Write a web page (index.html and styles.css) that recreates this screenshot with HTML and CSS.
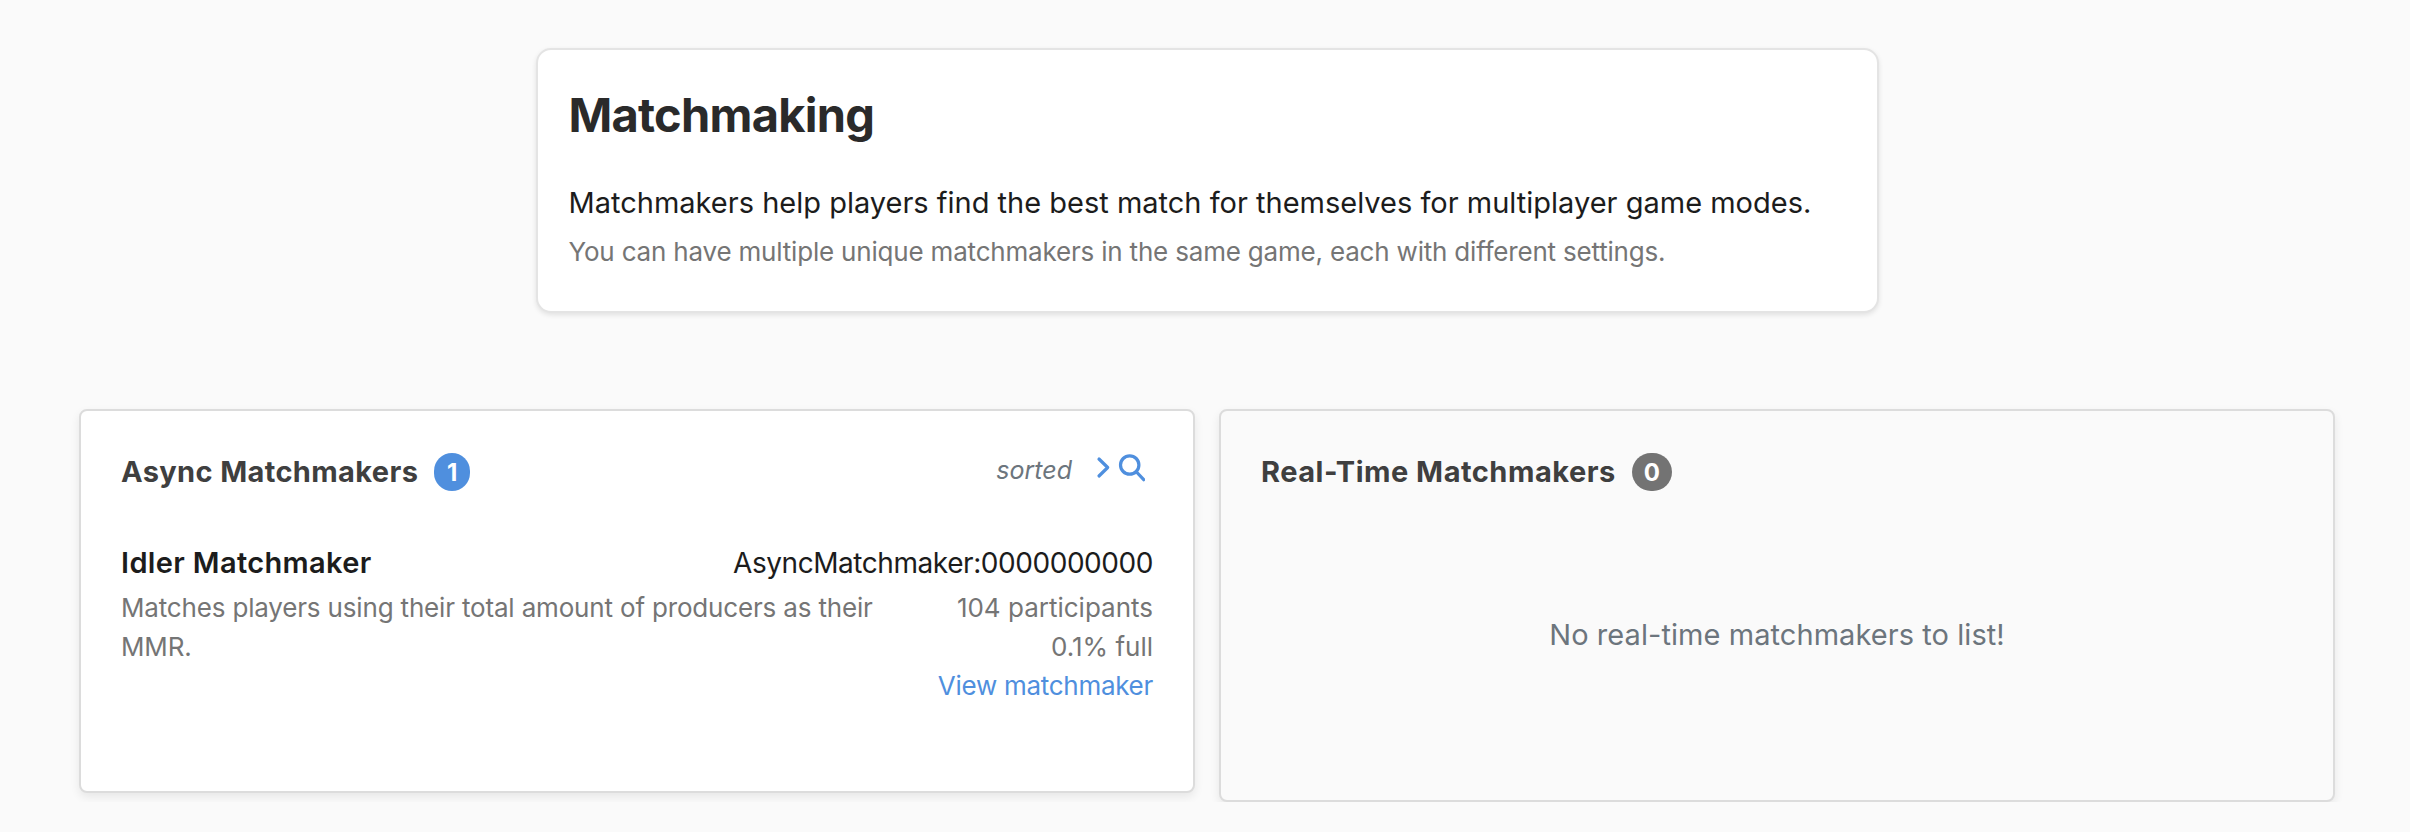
FILE: index.html
```html
<!DOCTYPE html>
<html lang="en">
<head>
<meta charset="utf-8">
<title>Matchmaking</title>
<link rel="stylesheet" href="styles.css">
</head>
<body>
<main class="page">
  <section class="intro">
    <h1 class="intro-title">Matchmaking</h1>
    <p class="intro-lead">Matchmakers help players find the best match for themselves for multiplayer game modes.</p>
    <p class="intro-note">You can have multiple unique matchmakers in the same game, each with different settings.</p>
  </section>
  <div class="columns">
    <section class="card">
      <header class="card-header">
        <h2 class="card-title">Async Matchmakers</h2>
        <span class="badge badge-primary">1</span>
        <div class="tools">
          <span class="sorted">sorted</span>
          <svg class="icon" width="50" height="30" viewBox="0 0 50 30" fill="none" stroke="#4f8fde" stroke-linecap="round" stroke-linejoin="round" stroke-width="3.2"><path d="M4 7 12.700 15.500 4 24"/><circle cx="34.700" cy="13" r="9.200"/><path d="m41.500 20 7.200 7.700"/></svg>
        </div>
      </header>
      <div class="matchmaker">
        <div class="matchmaker-head">
          <h3 class="matchmaker-name">Idler Matchmaker</h3>
          <span class="matchmaker-id">AsyncMatchmaker:0000000000</span>
        </div>
        <div class="matchmaker-body">
          <p class="description">Matches players using their total amount of producers as their MMR.</p>
          <div class="stats">
            <span>104 participants</span>
            <span>0.1% full</span>
            <a class="link">View matchmaker</a>
          </div>
        </div>
      </div>
    </section>
    <section class="card card-empty">
      <header class="card-header">
        <h2 class="card-title title-wide">Real-Time Matchmakers</h2>
        <span class="badge badge-muted">0</span>
      </header>
      <p class="empty">No real-time matchmakers to list!</p>
    </section>
  </div>
</main>
</body>
</html>
```
FILE: styles.css
```css
* { box-sizing: border-box; }
body { margin: 0; background: #fafafa; color: #1c1c1c; font-family: Inter, "Liberation Sans", sans-serif; }
h1, h2, h3, p { margin: 0; }
.page { width: 2256px; margin: 0 0 0 79px; padding-top: 48px; }
.intro { width: 1343px; height: 265px; margin: 0 auto; padding: 37px 31px 0; background: #fff; border: 2px solid #e4e4e4; border-radius: 15px; box-shadow: 0 2px 5px rgba(0, 0, 0, .1); white-space: nowrap; }
.intro-title { font-size: 47px; line-height: 56px; font-weight: 700; letter-spacing: -0.75px; color: #2a2a2a; }
.intro-lead { margin-top: 37px; font-size: 29px; line-height: 45px; }
.intro-note { margin-top: 7px; font-size: 26px; line-height: 39px; letter-spacing: -0.19px; color: #757575; }
.columns { display: flex; align-items: flex-start; gap: 24px; margin-top: 96px; }
.card { flex: 1 1 0; height: 384px; padding: 40px 40px 0; background: #fff; border: 2px solid #dcdcdc; border-radius: 8px; box-shadow: 0 4px 10px rgba(0, 0, 0, .08); white-space: nowrap; }
.card-empty { height: 393px; background: #fafafa; }
.card-header { display: flex; align-items: center; height: 42px; }
.card-title { font-size: 29px; line-height: 42px; font-weight: 700; letter-spacing: 0.36px; color: #3f3f3f; }
.title-wide { letter-spacing: 0.5px; }
.badge { display: flex; align-items: center; justify-content: center; height: 38px; margin-left: 16px; border-radius: 19px; color: #fff; font-size: 24px; font-weight: 700; }
.badge-primary { width: 36px; background: #4f8fde; }
.badge-muted { width: 40px; background: #737373; }
.tools { display: flex; align-items: center; gap: 23px; margin: -4px 8px 0 auto; }
.sorted { font-size: 25px; font-style: italic; color: #6c757d; }
.icon { margin-bottom: 7px; }
.matchmaker { margin-top: 47px; }
.matchmaker-head { display: flex; justify-content: space-between; line-height: 44px; }
.matchmaker-name { font-size: 29px; line-height: 45px; height: 44px; font-weight: 600; letter-spacing: 0.35px; }
.matchmaker-id { font-size: 28px; line-height: 46px; letter-spacing: -0.44px; height: 44px; }
.matchmaker-body { display: flex; justify-content: space-between; margin-top: 4px; font-size: 26px; line-height: 39px; color: #757575; }
.description { width: 780px; white-space: normal; letter-spacing: -0.17px; }
.stats { display: flex; flex-direction: column; align-items: flex-end; }
.link { color: #4f8fde; letter-spacing: -0.28px; }
.empty { margin-top: 120px; text-align: center; font-size: 29px; line-height: 44px; letter-spacing: 0.06px; color: #6c757d; }
```
